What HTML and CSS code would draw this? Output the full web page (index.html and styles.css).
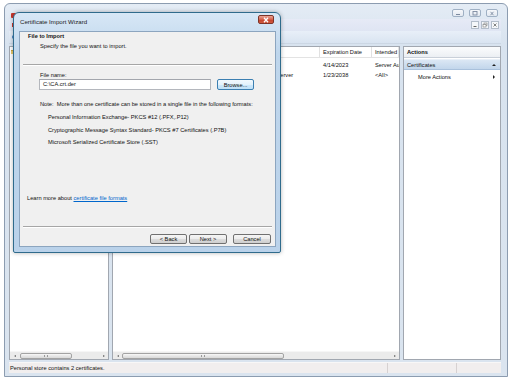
FILE: index.html
```html
<!DOCTYPE html>
<html lang="en">
<head>
  <meta charset="UTF-8" />
  <title>Certificates - Import</title>
  <link rel="stylesheet" href="styles.css">
</head>
<body>
  <div class="screen">
    <div class="mmc">
      <div class="mmc-title">
        <span class="app-icon"></span>
        <span class="mmc-caption">Console1 - [Console Root\Certificates - Current User\Personal\Certificates]</span>
        <div class="caption-btns">
          <span class="cbtn"><svg width="8" height="5" viewBox="0 0 8 5"><rect x="2" y="3" width="4" height="1" fill="#7d8ba0"/></svg></span>
          <span class="cbtn"><svg width="8" height="5" viewBox="0 0 8 5"><rect x="2" y="0.5" width="4" height="3.5" fill="none" stroke="#7d8ba0" stroke-width=".9"/></svg></span>
          <span class="cbtn"><svg width="8" height="5" viewBox="0 0 8 5"><path d="M2.5 0.8l3 3.4M5.5 0.8l-3 3.4" stroke="#7d8ba0" stroke-width=".9"/></svg></span>
        </div>
      </div>

      <div class="menubar">
        <span class="doc-icon"></span>
        <span class="menu">File</span>
        <span class="menu">Action</span>
        <span class="menu">View</span>
        <span class="menu">Favorites</span>
        <span class="menu">Window</span>
        <span class="menu">Help</span>
        <div class="mdi-btns">
          <span class="mbtn"><svg width="6" height="6" viewBox="0 0 6 6"><rect x="1.5" y="4" width="3" height="1" fill="#666"/></svg></span>
          <span class="mbtn"><svg width="6" height="6" viewBox="0 0 6 6"><rect x="2" y="1" width="3" height="2.5" fill="none" stroke="#888" stroke-width=".7"/><rect x="1" y="2.5" width="3" height="2.5" fill="#fff" stroke="#888" stroke-width=".7"/></svg></span>
          <span class="mbtn"><svg width="6" height="6" viewBox="0 0 6 6"><path d="M1.5 1.5l3 3M4.5 1.5l-3 3" stroke="#666" stroke-width=".8"/></svg></span>
        </div>
      </div>

      <div class="toolbar">
        <span class="tool-icon"></span>
      </div>

      <div class="panes">
        <div class="pane tree">
          <div class="pane-body">
            <div class="tree-row"><span class="folder"></span>Console Root</div>
          </div>
          <div class="hscroll">
            <span class="arrow left"></span>
            <span class="thumb tree-thumb"><i></i></span>
            <span class="track"></span>
            <span class="arrow right"></span>
          </div>
        </div>

        <div class="pane list">
          <div class="pane-body">
            <div class="list-head">
              <span class="col c1">Issued To</span>
              <span class="col c2">Issued By</span>
              <span class="col c3">Expiration Date</span>
              <span class="col c4">Intended Purposes</span>
            </div>
            <div class="rows">
              <div class="row">
                <span class="col c1">www.contoso.com</span>
                <span class="col c2">DigiCert CA</span>
                <span class="col c3">4/14/2023</span>
                <span class="col c4">Server Authentication</span>
              </div>
              <div class="row">
                <span class="col c1">Local Root</span>
                <span class="col c2">Local Certificate Authorities Server</span>
                <span class="col c3">1/23/2038</span>
                <span class="col c4">&lt;All&gt;</span>
              </div>
            </div>
          </div>
          <div class="hscroll">
            <span class="arrow left"></span>
            <span class="thumb list-thumb"><i></i></span>
            <span class="track"></span>
            <span class="arrow right"></span>
          </div>
        </div>

        <div class="pane actions">
          <div class="actions-head">Actions</div>
          <div class="actions-group">Certificates<span class="up"></span></div>
          <div class="actions-item">More Actions<span class="more"></span></div>
        </div>
      </div>

      <div class="statusbar">
        <span class="status-main">Personal store contains 2 certificates.</span>
        <span class="status-cell wide"></span>
        <span class="status-cell"></span>
      </div>
    </div>

    <div class="wizard">
      <div class="wiz-title">
        <span>Certificate Import Wizard</span>
        <span class="wiz-close"><svg width="8" height="6" viewBox="0 0 8 6"><path d="M2 0.8l4 4.4M6 0.8l-4 4.4" stroke="#fff" stroke-width="1.3"/></svg></span>
      </div>
      <div class="wiz-client">
        <div class="wiz-header">
          <div class="wiz-h1">File to Import</div>
          <div class="wiz-h2">Specify the file you want to import.</div>
        </div>
        <div class="etched"></div>
        <div class="wiz-body">
          <div class="label">File name:</div>
          <div class="file-row">
            <div class="input">C:\CA.crt.der</div>
            <button class="btn focus browse">Browse...</button>
          </div>
          <p class="note">Note:&nbsp; More than one certificate can be stored in a single file in the following formats:</p>
          <ul class="formats">
            <li>Personal Information Exchange- PKCS #12 (.PFX,.P12)</li>
            <li>Cryptographic Message Syntax Standard- PKCS #7 Certificates (.P7B)</li>
            <li>Microsoft Serialized Certificate Store (.SST)</li>
          </ul>
          <p class="learn">Learn more about <a href="#">certificate file formats</a></p>
        </div>
        <div class="etched"></div>
        <div class="wiz-footer">
          <button class="btn back">&lt; Back</button>
          <button class="btn next">Next &gt;</button>
          <button class="btn cancel">Cancel</button>
        </div>
      </div>
    </div>
  </div>
</body>
</html>
```

FILE: styles.css
```css
* {
  margin: 0;
  padding: 0;
  box-sizing: border-box;
}

body {
  font-family: "Liberation Sans", Arial, sans-serif;
  font-size: 5.7px;
  line-height: 8px;
  color: #111;
  background: #fff;
}

.screen {
  position: relative;
  width: 512px;
  height: 381px;
  overflow: hidden;
}

/* ---- console window (inactive, behind the wizard) ---- */

.mmc {
  margin: 3px 4px 0;
  height: 374px;
  border: 1px solid #8c9cb0;
  border-radius: 6px 6px 0 0;
  background: linear-gradient(#e4ecf5, #d8e3ef 40px, #dae4ef);
  padding: 0 6px 3px 4px;
  display: flex;
  flex-direction: column;
}

.mmc-title {
  height: 15px;
  display: flex;
  align-items: flex-start;
}

.app-icon {
  width: 5px;
  height: 5px;
  margin: 9px 0 0 2px;
  background: #c8372d;
  border-radius: 1px;
}

.mmc-caption {
  margin: 7px 0 0 8px;
  color: #555;
  white-space: nowrap;
}

.caption-btns {
  margin: 5px 3px 0 auto;
  display: flex;
  gap: 5px;
}

.cbtn {
  width: 12px;
  height: 8px;
  border: 1px solid #9fb0c4;
  border-radius: 2px;
  background: linear-gradient(#f6f8fb, #e3e9f1);
  display: flex;
  align-items: center;
  justify-content: center;
}

.menubar {
  height: 12px;
  display: flex;
  align-items: center;
  gap: 6px;
  background: linear-gradient(#e6eaf6, #dfe5f3);
}

.doc-icon {
  width: 4px;
  height: 4px;
  margin-left: 3px;
  background: #c8372d;
}

.menu {
  color: #222;
}

.mdi-btns {
  margin: 0 2px 0 auto;
  display: flex;
  gap: 2px;
}

.mbtn {
  width: 8px;
  height: 8px;
  border: 1px solid #b3bdca;
  background: #f5f7fa;
  display: flex;
  align-items: center;
  justify-content: center;
}

.toolbar {
  height: 13px;
  display: flex;
  align-items: center;
  background: linear-gradient(#e8eff8, #d9e4f1);
  border-bottom: 1px solid #ccd7e4;
}

.tool-icon {
  width: 4px;
  height: 4px;
  margin-left: 3px;
  border-radius: 50%;
  background: #3b7bc4;
}

.panes {
  height: 314px;
  margin-top: 2px;
  display: flex;
  gap: 3px;
}

.pane {
  background: #fff;
  border: 1px solid #a1a7b0;
  display: flex;
  flex-direction: column;
}

.pane-body {
  flex: 1;
  overflow: hidden;
}

.tree {
  width: 100px;
}

.list {
  width: 288px;
}

.actions {
  flex: 1;
}

.tree-row {
  display: flex;
  align-items: center;
  height: 10px;
  padding-left: 1px;
  gap: 3px;
  white-space: nowrap;
}

.folder {
  width: 5px;
  height: 4px;
  background: #e8c96a;
  border-top: 1px solid #caa23c;
}

/* horizontal scrollbars */
.hscroll {
  height: 8px;
  display: flex;
  align-items: center;
  background: #ebebeb;
  border-top: 1px solid #f6f6f6;
}

.hscroll .arrow {
  width: 9px;
  height: 100%;
  display: flex;
  align-items: center;
  justify-content: center;
}

.arrow.left::before,
.arrow.right::before {
  content: "";
  border-top: 1.5px solid transparent;
  border-bottom: 1.5px solid transparent;
}

.arrow.left::before {
  border-right: 2px solid #666;
}

.arrow.right::before {
  border-left: 2px solid #666;
}

.thumb {
  height: 6px;
  border: 1px solid #a3a3a3;
  border-radius: 2px;
  background: linear-gradient(#f8f8f8, #e6e6e6 50%, #dadada);
  display: flex;
  align-items: center;
  justify-content: center;
}

.thumb i {
  width: 4px;
  height: 2px;
  border-left: 1px solid #999;
  border-right: 1px solid #999;
}

.tree-thumb {
  width: 52px;
  margin-left: 1px;
}

.list-thumb {
  width: 162px;
}

.track {
  flex: 1;
}

/* certificate list */
.list-head {
  height: 11px;
  display: flex;
  border-bottom: 1px solid #e3e3e3;
}

.list-head .col {
  border-right: 1px solid #e1e1e1;
}

.col {
  flex: none;
  padding-left: 3px;
  white-space: nowrap;
  overflow: hidden;
  line-height: 10px;
}

.c1 { width: 90px; }
.c2 { width: 117px; }
.c3 { width: 52px; }
.c4 { width: 27px; }

.rows {
  padding-top: 2px;
}

.row {
  height: 10px;
  display: flex;
}

/* actions pane */
.actions-head {
  height: 11px;
  padding-left: 3px;
  font-weight: bold;
  line-height: 10px;
  background: linear-gradient(#fbfcfd, #eceff3);
  border-bottom: 1px solid #c9d0d9;
}

.actions-group {
  height: 11px;
  margin-top: 1px;
  padding: 0 4px 0 3px;
  display: flex;
  align-items: center;
  justify-content: space-between;
  background: linear-gradient(#dbe7f4, #c2d6eb);
  border-top: 1px solid #e9f0f8;
  border-bottom: 1px solid #a9c1dc;
}

.up {
  border-left: 2px solid transparent;
  border-right: 2px solid transparent;
  border-bottom: 2.5px solid #222;
}

.actions-item {
  height: 10px;
  margin-top: 2px;
  padding: 0 5px 0 14px;
  display: flex;
  align-items: center;
  justify-content: space-between;
}

.more {
  border-top: 2px solid transparent;
  border-bottom: 2px solid transparent;
  border-left: 2.5px solid #222;
}

/* status bar */
.statusbar {
  height: 11px;
  margin-top: 2px;
  display: flex;
  background: #f1eeee;
  border-top: 1px solid #f8f7f7;
}

.status-main {
  flex: 1;
  padding-left: 1px;
  line-height: 10px;
}

.status-cell {
  width: 45px;
  border-left: 1px solid #d6d1d1;
}

.status-cell.wide {
  width: 69px;
}

/* ---- wizard dialog (active, on top) ---- */

.wizard {
  position: absolute;
  left: 13px;
  top: 12px;
  width: 268px;
  height: 241px;
  border: 1px solid #2f6b8c;
  border-radius: 6px 6px 2px 2px;
  background: linear-gradient(#d7e7f6, #bfd6ec 40px, #bad2ea);
  padding: 0 4px 5px 5px;
  display: flex;
  flex-direction: column;
  box-shadow: 0 0 4px rgba(0, 0, 0, 0.3);
}

.wiz-title {
  height: 18px;
  display: flex;
  align-items: center;
  padding-left: 1px;
  font-size: 6.1px;
  color: #1b1b1b;
}

.wiz-close {
  align-self: flex-start;
  margin: 2px 2px 0 auto;
  width: 16px;
  height: 9px;
  border: 1px solid #7e3428;
  border-radius: 2px;
  background: linear-gradient(#eba596, #d5614b 50%, #c3422d 51%, #d25a3e);
  display: flex;
  align-items: center;
  justify-content: center;
}

.wiz-client {
  flex: 1;
  background: #f0f0f0;
  border: 1px solid #8ca5bf;
  display: flex;
  flex-direction: column;
}

.wiz-header {
  height: 32px;
  padding-left: 8px;
}

.wiz-h1 {
  font-weight: bold;
}

.wiz-h2 {
  margin-top: 2px;
  padding-left: 12px;
}

.etched {
  height: 2px;
  margin: 0 3px;
  border-top: 1px solid #a6a6a6;
  border-bottom: 1px solid #fff;
}

.wiz-body {
  flex: 1;
  padding-left: 19px;
  display: flex;
  flex-direction: column;
}

.label {
  margin-top: 5px;
  padding-left: 1px;
}

.file-row {
  display: flex;
  align-items: center;
}

.input {
  width: 172px;
  height: 11px;
  padding-left: 3px;
  line-height: 9px;
  background: #fff;
  border: 1px solid #b4b7bd;
  border-top-color: #a3a6ad;
}

.btn {
  height: 10px;
  border: 1px solid #707070;
  border-radius: 2px;
  background: linear-gradient(#f5f5f5, #ebebeb 50%, #dddddd 51%, #cfcfcf);
  font: inherit;
  line-height: 8px;
  color: #111;
}

.btn.focus {
  border-color: #3c7fb1;
  background: linear-gradient(#f1f8fd, #e3f2fc 50%, #cfe9fb 51%, #bfe0f7);
}

.browse {
  width: 37px;
  height: 11px;
  margin-left: 6px;
}

.note {
  margin-top: 10px;
  padding-left: 1px;
}

.formats {
  list-style: none;
  padding-left: 9px;
}

.formats li {
  margin-top: 5px;
}

.formats li:last-child {
  margin-top: 4px;
}

.learn {
  margin: auto 0 24px -12px;
}

.learn a {
  color: #0066cc;
}

.wiz-footer {
  display: flex;
  justify-content: flex-end;
  padding: 6px 4px 2px 0;
}

.back {
  width: 37px;
  margin-right: 2px;
}

.next {
  width: 38px;
  margin-right: 6px;
}

.cancel {
  width: 38px;
}
```
